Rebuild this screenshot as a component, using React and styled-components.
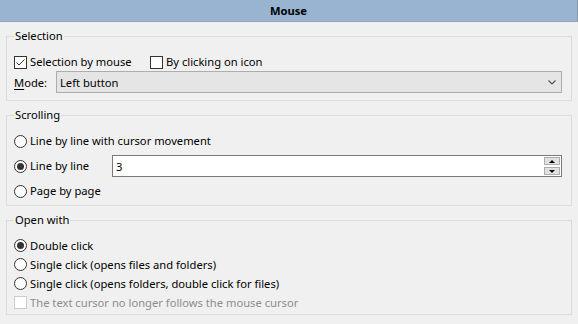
import React from 'react'
import styled, { createGlobalStyle } from 'styled-components'

const GlobalStyle = createGlobalStyle`
  html, body {
    margin: 0;
    padding: 0;
    background: #f0f0f0;
  }
  body {
    font-family: 'Noto Sans', 'Segoe UI', sans-serif;
    font-size: 11.2px;
    color: #000;
  }
`

const Page = styled.div`
  width: 578px;
  height: 324px;
  background: #f0f0f0;
  overflow: hidden;
`
const Header = styled.div`
  box-sizing: border-box;
  width: 578px;
  height: 22px;
  background: #99b4d1;
  border-right: 1px solid #8c98a6;
  border-bottom: 1px solid #9aa3ad;
  display: flex;
  align-items: center;
  justify-content: center;
  font-weight: bold;
  line-height: 16px;
`
const Content = styled.div`
  display: flex;
  flex-direction: column;
  gap: 6px;
  padding: 6px 6px 0;
`
const Group = styled.fieldset`
  margin: 0;
  min-width: 0;
  border: 1px solid #dcdcdc;
  padding: ${p => p.$pad};
  display: flex;
  flex-direction: column;
  gap: ${p => p.$gap || 0}px;
`
const Legend = styled.legend`
  padding: 0 1px;
  margin: 0;
  line-height: 16px;
`
const Row = styled.div`
  display: flex;
  align-items: center;
  height: ${p => p.$h}px;
`
const Item = styled.label`
  display: flex;
  align-items: center;
  flex: none;
  width: ${p => (p.$w ? `${p.$w}px` : 'auto')};
  color: ${p => (p.$disabled ? '#8d8d8d' : '#000')};
  line-height: 16px;
`
const Box = styled.span`
  box-sizing: border-box;
  width: 13px;
  height: 13px;
  flex: none;
  margin-right: 3px;
  background: #fff;
  border: 1px solid ${p => (p.$disabled ? '#cccccc' : '#333333')};
  display: flex;
  align-items: center;
  justify-content: center;
`
const Circle = styled(Box)`
  border-radius: 50%;
`
const Dot = styled.span`
  width: 7px;
  height: 7px;
  border-radius: 50%;
  background: #333;
`
const FieldLabel = styled.span`
  width: 42px;
  flex: none;
  u {
    text-decoration: underline;
    text-underline-offset: 2px;
  }
`
const Select = styled.div`
  box-sizing: border-box;
  flex: 1;
  height: 22px;
  background: #e5e5e5;
  border: 1px solid #adadad;
  padding: 0 5px 0 3px;
  display: flex;
  align-items: center;
  justify-content: space-between;
`
const Spin = styled.div`
  box-sizing: border-box;
  flex: 1;
  height: 22px;
  background: #fff;
  border: 1px solid #7a7a7a;
  padding: 0 1px 0 3px;
  display: flex;
  align-items: center;
  justify-content: space-between;
`
const SpinButtons = styled.div`
  display: flex;
  flex-direction: column;
  gap: 2px;
`
const SpinButton = styled.span`
  box-sizing: border-box;
  width: 16px;
  height: 8px;
  background: #e1e1e1;
  border: 1px solid #adadad;
  display: flex;
  align-items: center;
  justify-content: center;
`
const Arrow = styled.span`
  width: 0;
  height: 0;
  border-left: 3px solid transparent;
  border-right: 3px solid transparent;
  ${p => (p.$up ? 'border-bottom: 3px solid #000;' : 'border-top: 3px solid #000;')}
`

function Check ({ checked, disabled, width, children }) {
  return (
    <Item $w={width} $disabled={disabled}>
      <Box $disabled={disabled}>
        {checked && (
          <svg width='11' height='11' viewBox='0 0 11 11'>
            <polyline points='1.5,5.5 4,8 9.5,2.5' fill='none' stroke='#333' strokeWidth='1' />
          </svg>
        )}
      </Box>
      {children}
    </Item>
  )
}

function Radio ({ checked, width, children }) {
  return (
    <Item $w={width}>
      <Circle>{checked && <Dot />}</Circle>
      {children}
    </Item>
  )
}

export default function App () {
  return (
    <Page>
      <GlobalStyle />
      <Header>Mouse</Header>
      <Content>
        <Group $pad='9px 9px 7px 7px'>
          <Legend>Selection</Legend>
          <Row $h={18}>
            <Check checked width={136}>Selection by mouse</Check>
            <Check>By clicking on icon</Check>
          </Row>
          <Row $h={22}>
            <FieldLabel><u>M</u>ode:</FieldLabel>
            <Select>
              <span>Left button</span>
              <svg width='8' height='5' viewBox='0 0 8 5'>
                <polyline points='0.5,0.5 4,4 7.5,0.5' fill='none' stroke='#555' strokeWidth='1.2' />
              </svg>
            </Select>
          </Row>
        </Group>

        <Group $pad='7px 9px 3px 7px' $gap={3}>
          <Legend>Scrolling</Legend>
          <Row $h={22}>
            <Radio>Line by line with cursor movement</Radio>
          </Row>
          <Row $h={22}>
            <Radio checked width={98}>Line by line</Radio>
            <Spin>
              <span>3</span>
              <SpinButtons>
                <SpinButton><Arrow $up /></SpinButton>
                <SpinButton><Arrow /></SpinButton>
              </SpinButtons>
            </Spin>
          </Row>
          <Row $h={22}>
            <Radio>Page by page</Radio>
          </Row>
        </Group>

        <Group $pad='8px 9px 2px 7px'>
          <Legend>Open with</Legend>
          <Row $h={19}><Radio checked>Double click</Radio></Row>
          <Row $h={19}><Radio>Single click (opens files and folders)</Radio></Row>
          <Row $h={19}><Radio>Single click (opens folders, double click for files)</Radio></Row>
          <Row $h={19}><Check disabled>The text cursor no longer follows the mouse cursor</Check></Row>
        </Group>
      </Content>
    </Page>
  )
}
